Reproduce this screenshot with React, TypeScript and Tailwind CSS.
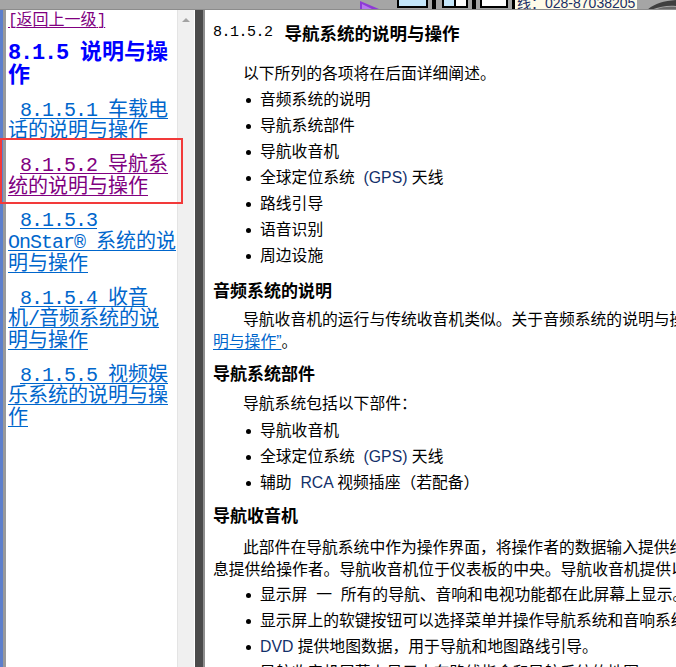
import React from 'react';

type Seg = { t: string; mono?: boolean };

const MONO = "font-['Liberation_Mono','Noto_Sans_CJK_SC',monospace] tracking-[-1px]";
const CJK = "font-['Noto_Sans_CJK_SC',sans-serif]";

const navLinks: { lines: Seg[][]; visited?: boolean }[] = [
  {
    lines: [
      [{ t: '8.1.5.1 ', mono: true }, { t: '车载电' }],
      [{ t: '话的说明与操作' }],
    ],
  },
  {
    visited: true,
    lines: [
      [{ t: '8.1.5.2 ', mono: true }, { t: '导航系' }],
      [{ t: '统的说明与操作' }],
    ],
  },
  {
    lines: [
      [{ t: '8.1.5.3', mono: true }],
      [{ t: 'OnStar® ', mono: true }, { t: '系统的说' }],
      [{ t: '明与操作' }],
    ],
  },
  {
    lines: [
      [{ t: '8.1.5.4 ', mono: true }, { t: '收音' }],
      [{ t: '机' }, { t: '/', mono: true }, { t: '音频系统的说' }],
      [{ t: '明与操作' }],
    ],
  },
  {
    lines: [
      [{ t: '8.1.5.5 ', mono: true }, { t: '视频娱' }],
      [{ t: '乐系统的说明与操' }],
      [{ t: '作' }],
    ],
  },
];

function NavLink({ lines, visited }: { lines: Seg[][]; visited?: boolean }) {
  return (
    <div className="mt-[12.5px] text-[20px] first:mt-[12px]">
      {lines.map((line, i) => (
        <div
          key={i}
          className={`h-[21.5px] whitespace-nowrap leading-[21.5px] ${i === 0 ? 'pl-[12px]' : ''}`}
        >
          <span
            className={`underline decoration-1 underline-offset-2 ${
              visited ? 'text-[#800080]' : 'text-[#0066cc]'
            }`}
          >
            {line.map((s, j) => (
              <span key={j} className={s.mono ? MONO : CJK}>
                {s.t}
              </span>
            ))}
          </span>
        </div>
      ))}
    </div>
  );
}

function Bullet({ children }: { children: React.ReactNode }) {
  return (
    <div className="flex h-[26px] items-center whitespace-pre pl-[33px] leading-[26px]">
      <span className="h-[5px] w-[5px] shrink-0 rounded-full bg-black" />
      <span className="ml-[9px]">{children}</span>
    </div>
  );
}

function Latin({ children }: { children: React.ReactNode }) {
  return <span className="text-[#12306a]">{children}</span>;
}

function Heading({ children, className }: { children: React.ReactNode; className: string }) {
  return (
    <div className={`h-[24px] whitespace-nowrap text-[17px] font-bold leading-[24px] ${className}`}>
      {children}
    </div>
  );
}

function Line({ children, className = '' }: { children: React.ReactNode; className?: string }) {
  return (
    <div className={`h-[22px] whitespace-pre leading-[22px] ${className}`}>{children}</div>
  );
}

function TopBand() {
  return (
    <div className="flex h-[10px] shrink-0 overflow-hidden border-b border-[#8c8c8c] bg-[#a5a5a5]">
      <svg className="ml-[360px] self-start" width="19" height="9" viewBox="0 0 19 9">
        <polygon points="0,1 19,9 0,9" fill="#8e3ad6" />
        <polygon points="2,4 12,9 2,9" fill="#b679ee" />
      </svg>
      <div className="ml-[18px] h-[8px] w-[31px] self-start border-2 border-t-0 border-black bg-[#c4e6fa]" />
      <div className="ml-[4px] w-[4px] bg-black" />
      <div className="ml-[6px] flex h-[8px] w-[26px] self-start border-2 border-t-0 border-black bg-[#c4e6fa]">
        <div className="flex-1" />
        <div className="w-[2px] bg-black" />
        <div className="flex-1 bg-white" />
      </div>
      <div className="ml-[4px] w-[4px] bg-black" />
      <div className="ml-[4px] h-[8px] w-[28px] self-start border-2 border-t-0 border-black bg-white" />
      <div className="ml-[4px] w-[3px] bg-black" />
      <div className="flex w-[122px] items-end bg-[#fffbe8] pl-[2px]">
        <span className="whitespace-nowrap font-['Liberation_Sans','Noto_Sans_CJK_SC',sans-serif] text-[14px] leading-[12px] text-[#1a2f66]">
          线：028-87038205
        </span>
      </div>
      <svg className="ml-[10px]" width="29" height="10" viewBox="0 0 29 10">
        <path d="M0 10 C7 4 16 1 29 0 L29 6 C20 5 11 7 4 10 Z" fill="#3f3f3f" />
        <path d="M8 10 C14 7 21 6 29 7 L29 10 Z" fill="#6a6a6a" />
      </svg>
    </div>
  );
}

export default function App() {
  return (
    <div className="relative flex h-[667px] w-[676px] flex-col overflow-hidden bg-[#a5a5a5]">
      <TopBand />
      <div className="flex min-h-0 flex-1">
        <div className="w-[3px] bg-[#5d7fcc]" />
        <div className="w-[3px] bg-[#9a9a9a]" />

        <div className="w-[171px] overflow-hidden bg-white pl-[2px]">
          <div className="h-[17px] whitespace-nowrap text-[16px] leading-[17px]">
            <span className="underline decoration-1 underline-offset-2 text-[#800080]">
              <span className={MONO}>[</span>
              <span className={CJK}>返回上一级</span>
              <span className={MONO}>]</span>
            </span>
          </div>
          <div className="mt-[11px] text-[22px] font-bold leading-[23px] text-[#0000ff]">
            <div className="h-[23px] whitespace-nowrap">
              <span className="font-['Liberation_Mono','Noto_Sans_CJK_SC',monospace] tracking-[-1.2px]">
                8.1.5{' '}
              </span>
              <span className={CJK}>说明与操</span>
            </div>
            <div className={`h-[23px] ${CJK}`}>作</div>
          </div>
          {navLinks.map((l, i) => (
            <NavLink key={i} lines={l.lines} visited={l.visited} />
          ))}
        </div>

        <div className="flex w-[17px] justify-center border-l border-[#e4e4e4] bg-[#f0f0f0] pt-[8px]">
          <svg width="8" height="4" viewBox="0 0 8 4">
            <polygon points="4,0 8,4 0,4" fill="#a3a3a3" />
          </svg>
        </div>
        <div className="w-[1px] bg-white" />
        <div className="w-[8px] bg-[#4b4b4b]" />
        <div className="w-[2px] bg-[#8f8f8f]" />

        <div className="min-w-0 flex-1 overflow-hidden bg-white pl-[8px] pt-[11px] font-['Liberation_Sans','Noto_Sans_CJK_SC',sans-serif] text-[15.8px] text-black">
          <div className="flex h-[24px] items-center whitespace-nowrap leading-[24px]">
            <span className="font-['Liberation_Mono',monospace] text-[15px] tracking-[-0.5px]">
              8.1.5.2
            </span>
            <span className={`ml-[12px] text-[17.5px] font-bold ${CJK}`}>导航系统的说明与操作</span>
          </div>

          <Line className="mt-[18px] pl-[30px]">以下所列的各项将在后面详细阐述。</Line>
          <div className="mt-[2px]">
            <Bullet>音频系统的说明</Bullet>
            <Bullet>导航系统部件</Bullet>
            <Bullet>导航收音机</Bullet>
            <Bullet>
              全球定位系统  <Latin>(GPS)</Latin> 天线
            </Bullet>
            <Bullet>路线引导</Bullet>
            <Bullet>语音识别</Bullet>
            <Bullet>周边设施</Bullet>
          </div>

          <Heading className="mt-[11px]">音频系统的说明</Heading>
          <Line className="mt-[5px] pl-[30px]">
            导航收音机的运行与传统收音机类似。关于音频系统的说明与操作，请参见“8.1.5.4 收音机/音频系统的说
          </Line>
          <Line>
            <span className="underline decoration-1 underline-offset-2 text-[#0066cc]">明与操作”</span>。
          </Line>

          <Heading className="mt-[10px]">导航系统部件</Heading>
          <Line className="mt-[6px] pl-[30px]">导航系统包括以下部件：</Line>
          <div className="mt-[3px]">
            <Bullet>导航收音机</Bullet>
            <Bullet>
              全球定位系统  <Latin>(GPS)</Latin> 天线
            </Bullet>
            <Bullet>
              辅助  <Latin>RCA</Latin> 视频插座（若配备）
            </Bullet>
          </div>

          <Heading className="mt-[9px]">导航收音机</Heading>
          <Line className="mt-[8px] pl-[30px]">
            此部件在导航系统中作为操作界面，将操作者的数据输入提供给导航系统，并将导航信
          </Line>
          <Line>息提供给操作者。导航收音机位于仪表板的中央。导航收音机提供以下功能：</Line>
          <div className="mt-[1px]">
            <Bullet>显示屏  一  所有的导航、音响和电视功能都在此屏幕上显示。</Bullet>
            <Bullet>显示屏上的软键按钮可以选择菜单并操作导航系统和音响系统。</Bullet>
            <Bullet>
              <Latin>DVD</Latin> 提供地图数据，用于导航和地图路线引导。
            </Bullet>
            <Bullet>导航收音机屏幕上显示本车路线指令和导航系统的地图。</Bullet>
          </div>
        </div>
      </div>

      <div className="pointer-events-none absolute left-0 top-[138px] h-[66px] w-[183px] border-2 border-[#f23a3a]" />
    </div>
  );
}
